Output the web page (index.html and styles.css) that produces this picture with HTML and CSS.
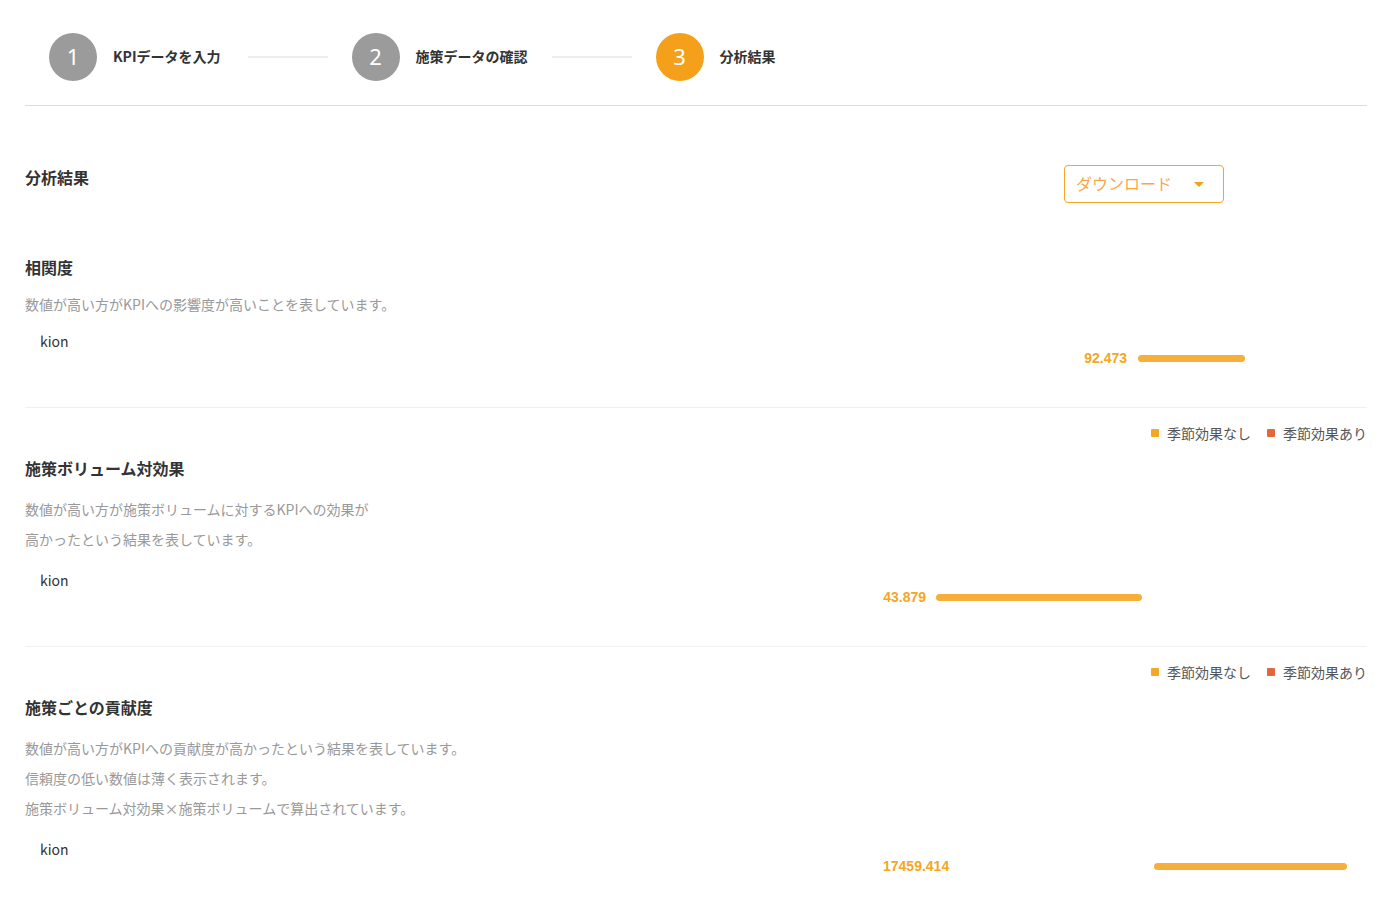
FILE: index.html
```html
<!DOCTYPE html>
<html lang="ja">
<head>
<meta charset="utf-8">
<title>分析結果</title>
<link rel="stylesheet" href="styles.css">
</head>
<body>
<div class="page">
  <div class="stepper">
    <div class="step">
      <span class="step-num">1</span>
      <span class="step-label">KPIデータを入力</span>
    </div>
    <span class="step-line"></span>
    <div class="step">
      <span class="step-num">2</span>
      <span class="step-label">施策データの確認</span>
    </div>
    <span class="step-line step-line-tight"></span>
    <div class="step step-active">
      <span class="step-num">3</span>
      <span class="step-label">分析結果</span>
    </div>
  </div>

  <div class="result-head">
    <h1 class="page-title">分析結果</h1>
    <button class="download">ダウンロード<span class="caret"></span></button>
  </div>

  <section class="section section-first">
    <h2 class="sec-title">相関度</h2>
    <div class="desc desc-single"><p>数値が高い方がKPIへの影響度が高いことを表しています。</p></div>
    <div class="chart">
      <div class="chart-label">kion</div>
      <div class="bar-row">
        <span class="bar-value" style="left:1022px;width:80px">92.473</span>
        <span class="bar" style="left:1113px;width:107px"></span>
      </div>
    </div>
  </section>

  <section class="section">
    <div class="legend">
      <span class="legend-item"><i class="dot dot-a"></i>季節効果なし</span>
      <span class="legend-item"><i class="dot dot-b"></i>季節効果あり</span>
    </div>
    <h2 class="sec-title">施策ボリューム対効果</h2>
    <div class="desc">
      <p>数値が高い方が施策ボリュームに対するKPIへの効果が</p>
      <p>高かったという結果を表しています。</p>
    </div>
    <div class="chart">
      <div class="chart-label">kion</div>
      <div class="bar-row">
        <span class="bar-value" style="left:821px;width:80px">43.879</span>
        <span class="bar" style="left:911px;width:206px"></span>
      </div>
    </div>
  </section>

  <section class="section section-last">
    <div class="legend">
      <span class="legend-item"><i class="dot dot-a"></i>季節効果なし</span>
      <span class="legend-item"><i class="dot dot-b"></i>季節効果あり</span>
    </div>
    <h2 class="sec-title">施策ごとの貢献度</h2>
    <div class="desc">
      <p>数値が高い方がKPIへの貢献度が高かったという結果を表しています。</p>
      <p>信頼度の低い数値は薄く表示されます。</p>
      <p>施策ボリューム対効果×施策ボリュームで算出されています。</p>
    </div>
    <div class="chart">
      <div class="chart-label">kion</div>
      <div class="bar-row">
        <span class="bar-value bar-value-left" style="left:858px">17459.414</span>
        <span class="bar" style="left:1129px;width:193px"></span>
      </div>
    </div>
  </section>
</div>
</body>
</html>
```

FILE: styles.css
```css
* { box-sizing: border-box; }
html, body { margin: 0; padding: 0; background: #fff; }
body {
  font-family: "Noto Sans CJK JP", "Noto Sans", sans-serif;
  color: #333;
}
.page { padding: 0 24px 0 25px; }

/* stepper */
.stepper {
  display: flex;
  align-items: center;
  padding: 33px 0 24px 24px;
  border-bottom: 1px solid #dcdcdc;
}
.step { display: flex; align-items: center; gap: 16px; }
.step-num {
  width: 48px; height: 48px;
  border-radius: 50%;
  background: #9b9b9b;
  color: #fff;
  display: flex; align-items: center; justify-content: center;
  font-family: "Noto Sans", sans-serif;
  font-size: 22px;
  line-height: 1;
  padding-bottom: 2px;
}
.step-active .step-num { background: #f5a01a; }
.step-label { font-size: 14px; font-weight: 700; color: #333; line-height: 20px; margin-top: -2px; }
.step-line {
  width: 80px; height: 2px; background: #ececec;
  margin: 0 24px 0 27px;
}
.step-line-tight { margin-left: 24px; }

/* header */
.result-head {
  display: flex;
  justify-content: space-between;
  align-items: flex-start;
  padding-top: 59px;
  padding-right: 143px;
}
.page-title {
  margin: 0;
  font-size: 16px; font-weight: 700; line-height: 24px; color: #333;
}
.download {
  width: 160px; height: 38px;
  border: 1px solid #f5a623;
  border-radius: 4px;
  background: #fff;
  color: #f5a84a;
  font-family: "Noto Sans CJK JP", sans-serif;
  font-size: 16px;
  display: flex; align-items: center;
  padding: 0 0 2px 11px;
  cursor: pointer;
}
.caret {
  margin-left: 22px;
  margin-top: 2px;
  width: 0; height: 0;
  border-left: 5px solid transparent;
  border-right: 5px solid transparent;
  border-top: 5px solid #f5a01a;
}

/* sections */
.section {
  border-bottom: 1px solid #f0f0f0;
  padding-top: 15px;
  padding-bottom: 39px;
}
.section-first { padding-top: 52px; }
.section-last { border-bottom: none; }
.legend {
  display: flex; justify-content: flex-end; gap: 16px;
  font-size: 14px; line-height: 20px; color: #555;
}
.legend-item { display: flex; align-items: center; }
.dot {
  display: inline-block; width: 8px; height: 8px; border-radius: 1px;
  margin-right: 8px;
}
.dot-a { background: #f5a623; }
.dot-b { background: #e0683a; }
.sec-title {
  margin: 13px 0 0;
  font-size: 16px; font-weight: 700; line-height: 24px; color: #333;
}
.section-first .sec-title { margin-top: 0; }
.desc { margin-top: 14px; font-size: 14px; color: #999; }
.desc p { margin: 0; line-height: 30px; }
.desc-single { margin-top: 14px; }
.desc-single p { line-height: 22px; }

.chart { margin-top: 16px; }
.chart-label { padding-left: 15px; font-size: 14px; line-height: 20px; color: #333; }
.bar-row { position: relative; height: 20px; margin-top: -3px; }
.bar-value {
  position: absolute; top: 0;
  text-align: right;
  font-family: "Liberation Sans", Arial, sans-serif;
  font-weight: 700; font-size: 14px; line-height: 20px;
  color: #f5a623;
}
.bar-value-left { text-align: left; }
.bar {
  position: absolute; top: 7px; height: 7px;
  background: #f7ae3b; border-radius: 4px;
}
```
